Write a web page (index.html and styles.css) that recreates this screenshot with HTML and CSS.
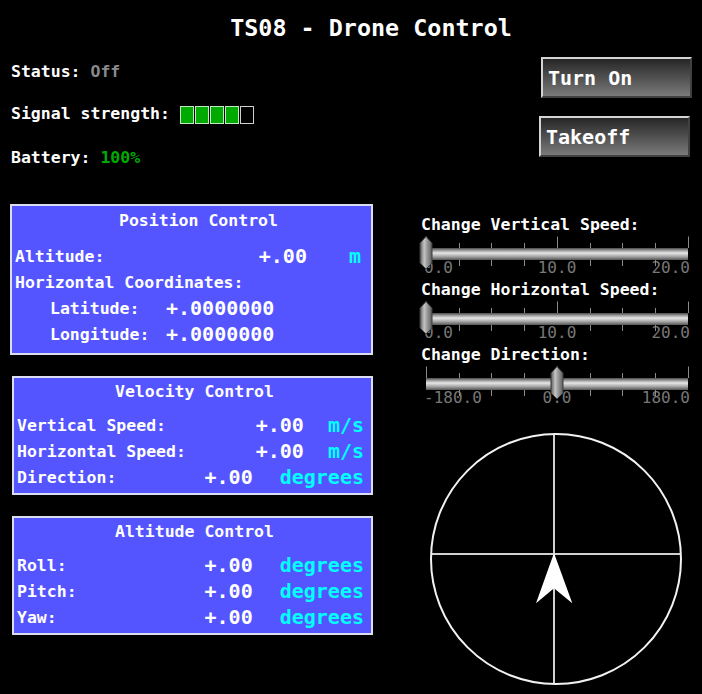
FILE: index.html
```html
<!DOCTYPE html>
<html>
<head>
<meta charset="utf-8">
<link rel="stylesheet" href="styles.css">
</head>
<body>
<svg class="defs" width="0" height="0" aria-hidden="true">
  <defs>
    <linearGradient id="trk" x1="0" y1="0" x2="0" y2="1">
      <stop offset="0" stop-color="#4a4a4a"/>
      <stop offset="0.2" stop-color="#9a9a9a"/>
      <stop offset="0.42" stop-color="#e6e6e6"/>
      <stop offset="0.7" stop-color="#a8a8a8"/>
      <stop offset="1" stop-color="#555"/>
    </linearGradient>
    <linearGradient id="hdl" x1="0" y1="0" x2="1" y2="0">
      <stop offset="0" stop-color="#5a5a5a"/>
      <stop offset="0.35" stop-color="#c4c4c4"/>
      <stop offset="0.6" stop-color="#999"/>
      <stop offset="1" stop-color="#5e5e5e"/>
    </linearGradient>
    <g id="handle">
      <polygon points="0,2.5 6,9 6,29 0,35 -6,29 -6,9" fill="url(#hdl)" stroke="#3c3c3c" stroke-width="1"/>
    </g>
    <g id="ticks" stroke="#8a8a8a" stroke-width="1">
      <line x1="16.5" y1="2.5" x2="16.5" y2="14"/>
      <line x1="147.5" y1="2.5" x2="147.5" y2="14"/>
      <line x1="278.5" y1="2.5" x2="278.5" y2="14"/>
      <line x1="49.5" y1="9" x2="49.5" y2="14"/>
      <line x1="81.5" y1="9" x2="81.5" y2="14"/>
      <line x1="114.5" y1="9" x2="114.5" y2="14"/>
      <line x1="180.5" y1="9" x2="180.5" y2="14"/>
      <line x1="212.5" y1="9" x2="212.5" y2="14"/>
      <line x1="245.5" y1="9" x2="245.5" y2="14"/>
      <line x1="49.5" y1="26" x2="49.5" y2="32"/>
      <line x1="81.5" y1="26" x2="81.5" y2="32"/>
      <line x1="114.5" y1="26" x2="114.5" y2="32"/>
      <line x1="180.5" y1="26" x2="180.5" y2="32"/>
      <line x1="212.5" y1="26" x2="212.5" y2="32"/>
      <line x1="245.5" y1="26" x2="245.5" y2="32"/>
    </g>
  </defs>
</svg>

<h1 class="title">TS08 - Drone Control</h1>

<div class="cols">
  <div class="left">
    <div class="stat">Status: <span class="off">Off</span></div>
    <div class="stat sig">Signal strength: <span class="bars"><i class="on"></i><i class="on"></i><i class="on"></i><i class="on"></i><i></i></span></div>
    <div class="stat bat">Battery: <span class="green">100%</span></div>

    <section class="panel pos">
      <div class="ptitle">Position Control</div>
      <div class="row first"><span class="lbl">Altitude:</span><span class="val">+.00</span><span class="unit u-m">m</span></div>
      <div class="row"><span class="lbl">Horizontal Coordinates:</span></div>
      <div class="row sub"><span class="lbl">Latitude:</span><span class="val">+.0000000</span></div>
      <div class="row sub"><span class="lbl">Longitude:</span><span class="val">+.0000000</span></div>
    </section>

    <section class="panel vel">
      <div class="ptitle">Velocity Control</div>
      <div class="row first"><span class="lbl">Vertical Speed:</span><span class="val">+.00</span><span class="unit u-ms">m/s</span></div>
      <div class="row"><span class="lbl">Horizontal Speed:</span><span class="val">+.00</span><span class="unit u-ms">m/s</span></div>
      <div class="row"><span class="lbl">Direction:</span><span class="val">+.00</span><span class="unit u-deg">degrees</span></div>
    </section>

    <section class="panel att">
      <div class="ptitle">Altitude Control</div>
      <div class="row first"><span class="lbl">Roll:</span><span class="val">+.00</span><span class="unit u-deg">degrees</span></div>
      <div class="row"><span class="lbl">Pitch:</span><span class="val">+.00</span><span class="unit u-deg">degrees</span></div>
      <div class="row"><span class="lbl">Yaw:</span><span class="val">+.00</span><span class="unit u-deg">degrees</span></div>
    </section>
  </div>

  <div class="right">
    <button class="btn b1">Turn On</button>
    <button class="btn b2">Takeoff</button>

    <div class="slabel first-label">Change Vertical Speed:</div>
    <div class="slider">
      <span class="tl tl-l">0.0</span><span class="tl tl-c">10.0</span><span class="tl tl-r">20.0</span>
      <svg class="sl-svg" width="290" height="45" viewBox="0 0 290 45">
        <use href="#ticks"/>
        <rect x="16" y="14" width="262" height="12" fill="url(#trk)"/>
        <use href="#handle" transform="translate(16,0)"/>
      </svg>
    </div>

    <div class="slabel">Change Horizontal Speed:</div>
    <div class="slider">
      <span class="tl tl-l">0.0</span><span class="tl tl-c">10.0</span><span class="tl tl-r">20.0</span>
      <svg class="sl-svg" width="290" height="45" viewBox="0 0 290 45">
        <use href="#ticks"/>
        <rect x="16" y="14" width="262" height="12" fill="url(#trk)"/>
        <use href="#handle" transform="translate(16,0)"/>
      </svg>
    </div>

    <div class="slabel">Change Direction:</div>
    <div class="slider">
      <span class="tl tl-l">-180.0</span><span class="tl tl-c">0.0</span><span class="tl tl-r">180.0</span>
      <svg class="sl-svg" width="290" height="45" viewBox="0 0 290 45">
        <use href="#ticks"/>
        <rect x="16" y="14" width="262" height="12" fill="url(#trk)"/>
        <use href="#handle" transform="translate(147,0)"/>
      </svg>
    </div>

    <svg class="compass" width="290" height="285" viewBox="0 0 290 285">
      <line x1="144" y1="25" x2="144" y2="275" stroke="#d0d0d0" stroke-width="2"/>
      <line x1="21" y1="145" x2="270" y2="145" stroke="#d0d0d0" stroke-width="2"/>
      <circle cx="146" cy="150" r="125" fill="none" stroke="#f2f2f2" stroke-width="2"/>
      <polygon points="144,144 162.3,194.3 144,179.3 126,194.3" fill="#fff"/>
    </svg>
  </div>
</div>
</body>
</html>
```

FILE: styles.css
```css
html, body {
  margin: 0;
  background: #000;
}

body {
  color: #fff;
  font-family: "DejaVu Sans Mono", monospace;
  font-weight: bold;
  width: 702px;
  height: 694px;
  overflow: hidden;
}

.defs {
  position: absolute;
  width: 0;
  height: 0;
}

.title {
  margin: 0;
  height: 54px;
  line-height: 57px;
  font-size: 23.4px;
  font-weight: bold;
  text-align: center;
  padding-left: 40px;
}

.cols {
  display: flex;
}

.left {
  width: 380px;
  box-sizing: border-box;
  padding-left: 10px;
  padding-top: 8px;
}

.stat {
  font-size: 16.5px;
  line-height: 20px;
  padding-left: 1px;
}

.sig { margin-top: 22px; }
.bat { margin-top: 24px; }

.off { color: #8a8a8a; }
.green { color: #00aa00; }

.bars {
  display: inline-flex;
  gap: 1px;
  vertical-align: middle;
}

.bars i {
  display: block;
  width: 12px;
  height: 16px;
  border: 1px solid #cfcfcf;
  background: #000;
}

.bars i.on {
  background: #00aa00;
  border-color: #c4e8c4;
}

.panel {
  background: #5555ff;
  border: 2px solid #dcdcf2;
  box-sizing: border-box;
  padding: 4px 7px 0 3px;
}

.pos {
  margin-top: 36px;
  width: 363px;
  height: 151px;
  padding-top: 5px;
}

.vel, .att {
  margin-top: 21px;
  margin-left: 2px;
  width: 361px;
  height: 119px;
}

.ptitle {
  font-size: 16.5px;
  line-height: 20px;
  padding-left: 98px;
}

.pos .ptitle { padding-left: 104px; }

.row {
  display: flex;
  align-items: center;
  height: 26px;
}

.row.first { margin-top: 10px; }
.pos .row.first { margin-top: 12px; }

.lbl {
  flex: 1;
  font-size: 16.5px;
}

.val {
  font-size: 20px;
}

.unit {
  font-size: 20px;
  color: #00ffff;
}

.u-m { margin-left: 42px; margin-right: 3px; }
.u-ms { margin-left: 24px; }
.u-deg { margin-left: 27px; }

.sub { padding-left: 35px; }
.sub .lbl { flex: none; width: 116px; }

.right {
  width: 292px;
  margin-left: 30px;
}

.btn {
  display: block;
  width: 151px;
  height: 41px;
  box-sizing: border-box;
  border: 2px solid;
  border-color: #d4d4d4 #404040 #404040 #d4d4d4;
  background: linear-gradient(#262626, #7a7a7a);
  color: #fff;
  font-family: "DejaVu Sans Mono", monospace;
  font-weight: bold;
  font-size: 20px;
  text-align: left;
  padding: 0 0 0 5px;
  margin: 0;
}

.b1 { margin: 3px 0 0 131px; }
.b2 { margin: 18px 0 0 129px; }

.slabel {
  font-size: 16.5px;
  line-height: 22px;
  margin-bottom: -2px;
  padding-left: 11px;
  white-space: nowrap;
}

.first-label { margin-top: 57px; }

.slider {
  position: relative;
  height: 45px;
}

.sl-svg {
  display: block;
  position: relative;
  z-index: 1;
}

.tl {
  position: absolute;
  top: 26px;
  font-family: "DejaVu Sans Mono", monospace;
  font-weight: normal;
  font-size: 16px;
  line-height: 16px;
  color: #777;
  white-space: nowrap;
}

.tl-l { left: 14px; }
.tl-c { left: 147px; transform: translateX(-50%); }
.tl-r { right: 12px; }

.compass {
  display: block;
}
```
